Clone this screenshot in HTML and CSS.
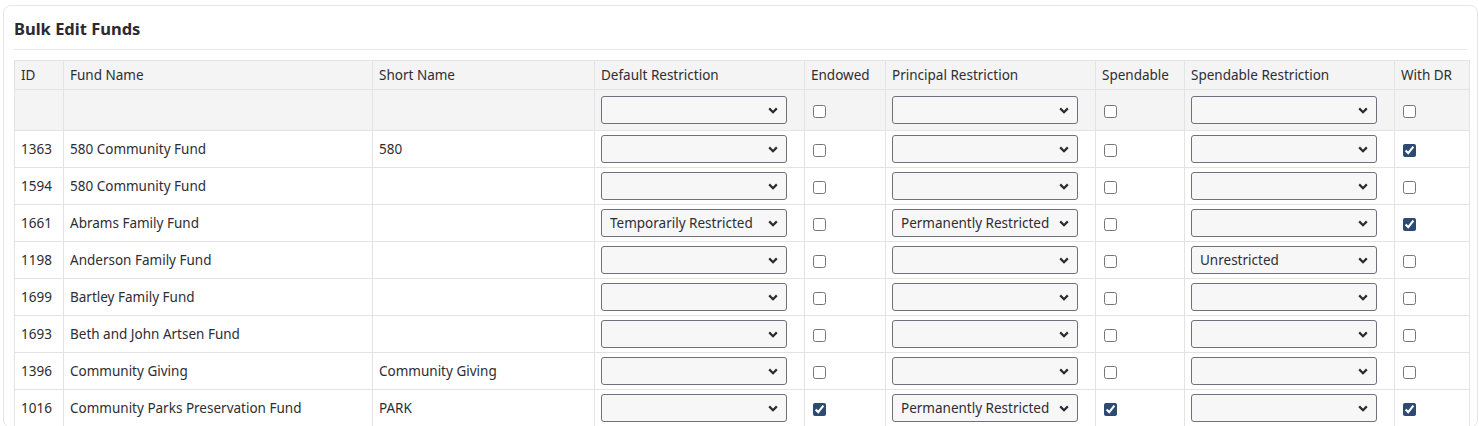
FILE: index.html
```html
<!DOCTYPE html>
<html>
<head>
<meta charset="utf-8">
<title>Bulk Edit Funds</title>
<link rel="stylesheet" href="styles.css">
</head>
<body>

<div class="card">
  <h2 class="card-title">Bulk Edit Funds</h2>

  <table class="funds">
    <colgroup>
      <col class="c-id"><col class="c-name"><col class="c-short"><col class="c-sel">
      <col class="c-endowed"><col class="c-sel"><col class="c-spendable"><col class="c-sel"><col class="c-dr">
    </colgroup>
    <thead>
      <tr>
        <th>ID</th>
        <th>Fund Name</th>
        <th>Short Name</th>
        <th>Default Restriction</th>
        <th>Endowed</th>
        <th>Principal Restriction</th>
        <th>Spendable</th>
        <th>Spendable Restriction</th>
        <th>With DR</th>
      </tr>
      <tr class="filters">
        <td></td>
        <td></td>
        <td></td>
        <td><select><option></option><option>Unrestricted</option><option>Temporarily Restricted</option><option>Permanently Restricted</option></select></td>
        <td><input type="checkbox"></td>
        <td><select><option></option><option>Unrestricted</option><option>Temporarily Restricted</option><option>Permanently Restricted</option></select></td>
        <td><input type="checkbox"></td>
        <td><select><option></option><option>Unrestricted</option><option>Temporarily Restricted</option><option>Permanently Restricted</option></select></td>
        <td><input type="checkbox"></td>
      </tr>
    </thead>
    <tbody id="rows"></tbody>
  </table>
</div>

<script>
var funds = [
  [1363, "580 Community Fund", "580", "", false, "", false, "", true],
  [1594, "580 Community Fund", "", "", false, "", false, "", false],
  [1661, "Abrams Family Fund", "", "Temporarily Restricted", false, "Permanently Restricted", false, "", true],
  [1198, "Anderson Family Fund", "", "", false, "", false, "Unrestricted", false],
  [1699, "Bartley Family Fund", "", "", false, "", false, "", false],
  [1693, "Beth and John Artsen Fund", "", "", false, "", false, "", false],
  [1396, "Community Giving", "Community Giving", "", false, "", false, "", false],
  [1016, "Community Parks Preservation Fund", "PARK", "", true, "Permanently Restricted", true, "", true]
];

var choices = ["", "Unrestricted", "Temporarily Restricted", "Permanently Restricted"];

function restrictionSelect(value) {
  var html = "<select>";
  choices.forEach(function(c) {
    html += "<option" + (c == value ? " selected" : "") + ">" + c + "</option>";
  });
  return html + "</select>";
}

function checkbox(on) {
  return '<input type="checkbox"' + (on ? " checked" : "") + ">";
}

var body = document.getElementById("rows");
funds.forEach(function(f) {
  var tr = document.createElement("tr");
  tr.innerHTML =
    "<td>" + f[0] + "</td>" +
    "<td>" + f[1] + "</td>" +
    "<td>" + f[2] + "</td>" +
    "<td>" + restrictionSelect(f[3]) + "</td>" +
    "<td>" + checkbox(f[4]) + "</td>" +
    "<td>" + restrictionSelect(f[5]) + "</td>" +
    "<td>" + checkbox(f[6]) + "</td>" +
    "<td>" + restrictionSelect(f[7]) + "</td>" +
    "<td>" + checkbox(f[8]) + "</td>";
  body.appendChild(tr);
});
</script>
</body>
</html>
```

FILE: styles.css
```css
body {
  font-family: "Noto Sans", "Open Sans", sans-serif;
  font-size: 13.5px;
  color: #2d2d33;
  margin: 5px 1px 0 3px;
  background: #fff;
}

.card {
  border: 1px solid #e4e6eb;
  border-radius: 8px;
  padding: 9px 10px 0 10px;
}

.card-title {
  font-size: 16.5px;
  font-weight: 700;
  color: #2a2a30;
  margin: 0;
  padding: 2px 0 9px 0;
  border-bottom: 1px solid #e6e8ec;
  margin-bottom: 10px;
}

/* funds grid */
.funds {
  border-collapse: collapse;
  table-layout: fixed;
  width: 1453px;
}

.c-id { width: 49px; }
.c-name { width: 309px; }
.c-short { width: 222px; }
.c-sel { width: 210px; }
.c-endowed { width: 81px; }
.c-spendable { width: 89px; }
.c-dr { width: 75px; }

.funds th,
.funds td {
  border: 1px solid #e3e3e3;
  text-align: left;
  vertical-align: middle;
  padding: 4px 6px;
  height: 28px;
  white-space: nowrap;
  overflow: hidden;
}

.funds th {
  font-weight: 400;
  background: #f4f4f4;
  height: 20px;
}

.funds tr.filters td {
  background: #f4f4f4;
  padding: 6px 6px;
}

.funds select {
  -webkit-appearance: none;
  appearance: none;
  width: 186px;
  height: 28px;
  font-family: inherit;
  font-size: 13.5px;
  color: #2d2d33;
  background: #f7f7f8 url("data:image/svg+xml,%3Csvg xmlns='http://www.w3.org/2000/svg' width='10' height='7' viewBox='0 0 10 7'%3E%3Cpath d='M1.2 1.4 5 5.2 8.8 1.4' fill='none' stroke='%232a2a30' stroke-width='2.2'/%3E%3C/svg%3E") no-repeat right 8px center;
  border: 1px solid #70707c;
  border-radius: 3px;
  padding: 0 24px 0 8px;
}

.funds input[type=checkbox] {
  width: 13px;
  height: 13px;
  margin: 0 0 0 2px;
  accent-color: #2c4a72;
  vertical-align: middle;
}
```
